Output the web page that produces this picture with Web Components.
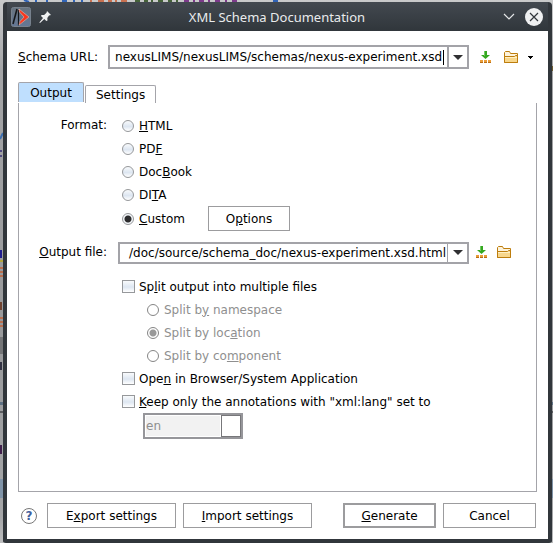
<!DOCTYPE html>
<html lang="en">
<head>
<meta charset="utf-8">
<title>XML Schema Documentation</title>
<style>
html, body { height: 100%; margin: 0; }
body { font: 12px/16px "DejaVu Sans", sans-serif; color: #000; background: #a5a6a8; overflow: hidden; }
</style>
</head>
<body>
<schema-app></schema-app>
<script>
const define = (name, html, setup) => customElements.define(name, class extends HTMLElement {
  constructor() {
    super();
    this.attachShadow({ mode: 'open' });
  }
  connectedCallback() {
    const t = document.createElement('template');
    t.innerHTML = typeof html === 'function' ? html(this) : html;
    this.shadowRoot.replaceChildren(t.content.cloneNode(true));
    if (setup) setup(this, this.shadowRoot);
  }
});

/* The editor window that shows around the dialog's edges. */
define('editor-backdrop', `
<style>
:host { position: absolute; inset: 0; overflow: hidden; z-index: -1; background: linear-gradient(#c9cacb, #a4a5a7 70px, #98999b 60%, #a5a6a8 95%, #bcbdbe); }
svg { display: block; width: 100%; height: 100%; }
</style>
<svg aria-hidden="true">
  <g stroke-width="2" fill="none">
    <path d="M24 0l5 2M36 0v2M47 0v2M62 1h5M74 0v2M82 0v2" stroke="#3064b8"/>
    <path d="M91 0v2M98 1h6M108 1h4M116 0v2M121 1h6" stroke="#c87050"/>
    <path d="M135 1h5M144 1h4M152 0v2M158 1h5M168 1h4M177 0v2" stroke="#45623a"/>
    <path d="M184 1h5M194 0v2M199 1h5M209 0v2M215 1h5M226 0v2M232 1h5" stroke="#7c3a8a"/>
    <path d="M273 1h5" stroke="#3064b8"/>
    <path d="M0 139l3-6" stroke="#3b6eb0"/><path d="M1 150v2M1 155v2" stroke="#504a80"/>
    <path d="M1 250v8" stroke="#201e90"/><path d="M0 261h3" stroke="#b5a53c"/>
    <path d="M0 268h3M0 272h3M0 276h3M0 318h3M0 322h3M0 326h3" stroke="#b86f4f"/><path d="M1 302v8" stroke="#704330"/>
    <path d="M1 362v8" stroke="#334"/><path d="M1 445v9" stroke="#40204c"/>
  </g>
  <rect y="337" width="3" height="17" fill="#747577"/>
  <rect y="402" width="100%" height="3" fill="#5f7285"/>
  <rect y="411" width="100%" height="2" fill="#5c5d60"/>
  <rect y="479" width="100%" height="19" fill="#8094a8"/>
  <rect x="551" y="66" width="2" height="5" fill="#6b5a2e"/>
</svg>`);

define('title-bar', `
<style>
:host { display: flex; align-items: center; height: 29px; padding: 0 9px 0 8px; color: #e9ebec;
  background: linear-gradient(#434950, #30363b); font: 13px/18px "Noto Sans", sans-serif; }
.side { display: flex; align-items: center; width: 56px; gap: 8px; }
.end { justify-content: flex-end; gap: 10px; }
h1 { flex: 1; margin: 0; font: inherit; text-align: center; }
button { display: flex; border: 0; padding: 0; background: none; color: inherit; }
svg { display: block; }
</style>
<div class="side">
  <svg width="20" height="20" viewBox="0 0 20 20" aria-hidden="true">
    <defs><linearGradient id="g" x2="0" y2="1"><stop stop-color="#68747f"/><stop offset="1" stop-color="#647795"/></linearGradient></defs>
    <rect x=".5" y=".5" width="19" height="19" rx="2" fill="url(#g)" stroke="#77818d"/>
    <path d="M6 2 2 17" stroke="#15171a" stroke-width="1.600" fill="none"/>
    <path d="M7.500 3v14.500L12 13" stroke="#15171a" stroke-width="1.200" fill="none"/>
    <path d="M8 2 18 10 8 18 9 14.500 13 10 8.500 5z" fill="#f9351b" stroke="#e7b9ad" stroke-width=".6"/>
  </svg>
  <button aria-label="Pin"><svg width="13" height="13" viewBox="0 0 13 13"><path d="m8 1 4 4-2 .6L8.300 8l.2 2.600-1.200.4-2-2L1 13l-.7-.5 3.700-4.500-2-2 .5-1 2.600-.1L7.500 2.800z" fill="#f0f1f2"/></svg></button>
</div>
<h1><slot></slot></h1>
<div class="side end">
  <button aria-label="Minimize"><svg width="12" height="8" viewBox="0 0 12 8"><path d="m1 1 5 5 5-5" fill="none" stroke="#e4e6e7" stroke-width="1.200"/></svg></button>
  <button aria-label="Close"><svg width="18" height="18" viewBox="0 0 18 18"><circle cx="9" cy="9" r="9" fill="#eff0f1"/><path d="m5 5 8 8M13 5l-8 8" stroke="#31363b" stroke-width="1.200"/></svg></button>
</div>`);

define('push-button', `
<style>
:host { display: block; }
button { display: block; box-sizing: border-box; width: 100%; height: 25px; padding: 0; font: inherit; color: #000; background: #fff; border: 1px solid #9c9c9e; }
:host([primary]) button { border-width: 2px; }
</style>
<button><slot></slot></button>`);

define('choice-item', el => `
<style>
:host { display: block; }
label { display: flex; align-items: center; gap: 5px; height: 23px; white-space: nowrap; }
input { appearance: none; box-sizing: border-box; flex: none; width: 12px; height: 12px; margin: 0; border: 1px solid #96989b;
  background: linear-gradient(#f8fafc, #dde6f1 55%, #fff); }
input[type=radio] { border-radius: 50%; }
input[type=checkbox] { width: 13px; height: 13px; margin-right: -1px; }
input:checked { background: radial-gradient(circle, #2c2c2e 3px, #f4f7fa 4px); }
input:disabled { border-color: #858585; background: #fff; }
input:disabled:checked { background: radial-gradient(circle, #999 3px, #fff 4px); }
:host([disabled]) label { color: #8f8f8f; }
</style>
<label><input type="${el.getAttribute('type') || 'radio'}" ${el.hasAttribute('checked') ? 'checked' : ''} ${el.hasAttribute('disabled') ? 'disabled' : ''}><span><slot></slot></span></label>`);

define('combo-field', el => `
<style>
:host { display: block; min-width: 0; }
.box { display: flex; box-sizing: border-box; height: 24px; border: 2px solid #a3a3a8; background: #fff; }
:host([compact]) .box { height: 22px; }
input { flex: 1; min-width: 0; width: 0; padding: 0 1px 0 0; border: 0; outline: 0; font: inherit; color: #000; background: none; text-align: right; }
i { width: 1px; height: 15px; margin-right: 3px; align-self: center; background: #000; }
button { display: flex; align-items: center; justify-content: center; box-sizing: border-box; width: 20px; padding: 0; border: 0; border-left: 2px solid #a3a3a8; background: #fff; }
:host([compact]) button { border-left-width: 1px; }
:host([tall]) .box { height: 26px; border-color: #96969a; }
:host([tall]) input { color: #8f8f8f; background: #f2f2f2; margin: 1px; text-align: left; }
:host([tall]) button { border: 1px solid #77777a; }
</style>
<div class="box"><input type="text" aria-label="${el.getAttribute('label')}" value="${el.getAttribute('value')}" ${el.hasAttribute('disabled') ? 'disabled' : ''}>${el.hasAttribute('caret') ? '<i></i>' : ''}
<button aria-label="Show list" ${el.hasAttribute('disabled') ? 'disabled' : ''}>${el.hasAttribute('disabled') ? '' : '<svg width="10" height="5" viewBox="0 0 10 5"><path d="M0 0h10L5 5z" fill="#303032"/></svg>'}</button></div>`,
(el, root) => { const f = root.querySelector('input'); f.scrollLeft = f.scrollWidth; });

define('tool-icons', el => `
<style>
:host { display: flex; align-items: center; gap: 9px; }
:host([more]) { gap: 12px; }
button { display: flex; padding: 0; border: 0; background: none; }
.more { margin-left: -3px; }
</style>
<button aria-label="Insert variable"><svg width="12" height="13" viewBox="0 0 12 13">
  <path d="M4 0h3v4h3L5.500 8 1 4h3z" fill="#35a820"/><path d="M4 0h1v5h-1z" fill="#71c965"/>
  <path d="M0 9h3v3H0zM4 9h3v3H4zM8 9h3v3H8z" fill="#eb9d38"/><path d="M0 11h3v1H0zM4 11h3v1H4zM8 11h3v1H8z" fill="#b96e14"/></svg></button>
<button aria-label="Browse"><svg width="15" height="13" viewBox="0 0 15 13">
  <path d="M.5 11.500V1.500L1.500.5h4l1 2h7v9z" fill="#fdf3dc" stroke="#bd7d0d"/><path d="M.5 5.500h10l1-1h2v7H.5z" fill="#f8d78c" stroke="#bd7d0d"/><path d="M1 6.500h12" stroke="#fff0c4"/></svg></button>
${el.hasAttribute('more') ? '<button class="more" aria-label="More locations"><svg width="5" height="3" viewBox="0 0 5 3"><path d="M0 0h5v1H4v1H3v1H2V2H1V1H0z"/></svg></button>' : ''}`);

define('tab-strip', `
<style>
:host { display: flex; align-items: flex-end; height: 21px; }
button { box-sizing: border-box; height: 18px; padding: 0 10px; font: inherit; color: #000; background: #fff; border: 1px solid #a4a4aa; border-bottom: 0; border-radius: 2px 2px 0 0; }
button[aria-selected=true] { height: 20px; width: 66px; margin-right: 1px; align-self: flex-start; background: #bfdffe; }
</style>
<div role="tablist" style="display:contents"><button role="tab" aria-selected="true">Output</button><button role="tab" aria-selected="false">Settings</button></div>`);

define('output-panel', `
<style>
:host { display: flex; flex-direction: column; box-sizing: border-box; padding: 11px 24px 0 11px; border: 1px solid #a4a4aa; border-top: 0; flex: 1; }
.row { display: grid; grid-template-columns: 77px minmax(0, 1fr); column-gap: 11px; }
.name { text-align: right; height: 23px; line-height: 23px; }
.opts { padding-left: 4px; }
.custom { display: flex; align-items: center; gap: 23px; }
.custom push-button { width: 82px; }
.file { margin-top: 10px; align-items: center; }
.pick { display: flex; gap: 7px; align-items: center; }
.pick combo-field { flex: 1; }
.checks { margin: 11px 0 0 92px; }
.sub { padding-left: 25px; }
.lang { width: 100px; margin-left: 21px; }
</style>
<div class="row"><span class="name">Format:</span>
  <div class="opts" role="radiogroup" aria-label="Format">
    <choice-item><u>H</u>TML</choice-item>
    <choice-item>PD<u>F</u></choice-item>
    <choice-item>Doc<u>B</u>ook</choice-item>
    <choice-item>DI<u>T</u>A</choice-item>
    <div class="custom"><choice-item checked><u>C</u>ustom</choice-item><push-button>O<u>p</u>tions</push-button></div>
  </div>
</div>
<div class="row file"><span class="name"><u>O</u>utput file:</span>
  <div class="pick"><combo-field compact label="Output file" value="/doc/source/schema_doc/nexus-experiment.xsd.html"></combo-field><tool-icons></tool-icons></div>
</div>
<div class="checks">
  <choice-item type="checkbox">Sp<u>l</u>it output into multiple files</choice-item>
  <div class="sub">
    <choice-item disabled>Split b<u>y</u> namespace</choice-item>
    <choice-item disabled checked>Split by loc<u>a</u>tion</choice-item>
    <choice-item disabled>Split by co<u>m</u>ponent</choice-item>
  </div>
  <choice-item type="checkbox">Ope<u>n</u> in Browser/System Application</choice-item>
  <choice-item type="checkbox"><u>K</u>eep only the annotations with "xml:lang" set to</choice-item>
  <combo-field class="lang" tall disabled label="Annotation language" value="en"></combo-field>
</div>`);

define('schema-dialog', `
<style>
:host { display: flex; flex-direction: column; box-sizing: border-box; height: 100%; border: solid #31363b; border-width: 0 4px 4px; border-radius: 4px 4px 3px 3px; background: #fff; overflow: hidden; }
title-bar { margin: 0 -4px; }
main { flex: 1; display: flex; flex-direction: column; padding: 14px 11px 11px; }
.url { display: flex; align-items: center; padding-right: 4px; margin-bottom: 13px; }
.url span { width: 90px; }
.url combo-field { flex: 1; margin-right: 11px; }
footer { display: flex; align-items: center; padding: 11px 1px 0 3px; }
.help { width: 16px; height: 16px; padding: 0; margin-right: 10px; border: 1px solid #777; border-radius: 50%; background: #fff; color: #415f9d; font: bold 12px/14px "DejaVu Sans", sans-serif; }
.a { width: 129px; margin-right: 7px; }
.b { width: 129px; margin-right: auto; }
.c { width: 93px; margin-left: 7px; }
</style>
<title-bar>XML Schema Documentation</title-bar>
<main>
  <div class="url"><span><u>S</u>chema URL:</span><combo-field caret label="Schema URL" value="nexusLIMS/nexusLIMS/schemas/nexus-experiment.xsd"></combo-field><tool-icons more></tool-icons></div>
  <tab-strip></tab-strip>
  <output-panel></output-panel>
  <footer><button class="help" aria-label="Help">?</button><push-button class="a">E<u>x</u>port settings</push-button><push-button class="b"><u>I</u>mport settings</push-button><push-button class="c" primary><u>G</u>enerate</push-button><push-button class="c">Cancel</push-button></footer>
</main>`);

define('schema-app', `
<style>
:host { display: block; position: relative; z-index: 0; box-sizing: border-box; height: 100%; padding: 2px 1px 0 3px; }
</style>
<editor-backdrop></editor-backdrop><schema-dialog></schema-dialog>`);
</script>
</body>
</html>
